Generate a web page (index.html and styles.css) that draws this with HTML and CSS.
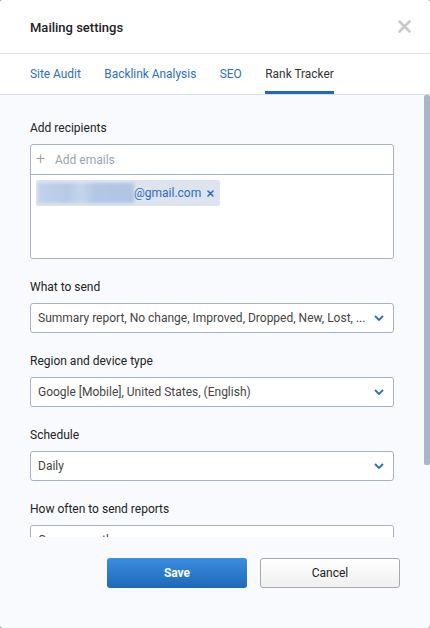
FILE: index.html
```html
<!DOCTYPE html>
<html lang="en">
<head>
    <meta charset="UTF-8">
    <meta name="viewport" content="width=device-width, initial-scale=1.0">
    <title>Mailing settings</title>
    <link rel="stylesheet" href="styles.css">
</head>
<body>
    <div class="modal">
        <div class="modal-header">
            <h2 class="modal-title">Mailing settings</h2>
            <button class="close-btn" aria-label="Close">
                <svg width="13" height="13" viewBox="0 0 13 13"><path d="M1.5 1.5l10 10M11.5 1.5l-10 10" stroke="#c9c9c9" stroke-width="2.6" stroke-linecap="round"/></svg>
            </button>
        </div>
        <div class="tabs">
            <a class="tab">Site Audit</a>
            <a class="tab">Backlink Analysis</a>
            <a class="tab">SEO</a>
            <a class="tab active">Rank Tracker</a>
        </div>

        <div class="body-wrap">
            <div class="modal-body">
                <div class="field">
                    <label class="field-label">Add recipients</label>
                    <div class="recipients">
                        <div class="add-row">
                            <span class="plus">+</span>
                            <span class="placeholder">Add emails</span>
                        </div>
                        <div class="tag-area">
                            <span class="tag">
                                <span class="tag-hidden"></span>
                                <span class="tag-text">@gmail.com</span>
                                <svg class="tag-x" width="7" height="7" viewBox="0 0 7 7"><path d="M1 1l5 5M6 1l-5 5" stroke="#2a6ebf" stroke-width="1.6" stroke-linecap="round"/></svg>
                            </span>
                        </div>
                    </div>
                </div>

                <div class="field">
                    <label class="field-label">What to send</label>
                    <div class="select">
                        <span class="select-value">Summary report, No change, Improved, Dropped, New, Lost, ...</span>
                        <svg class="chevron" width="10" height="6" viewBox="0 0 10 6"><path d="M1 1l4 4 4-4" fill="none" stroke="#2a6ebf" stroke-width="1.8"/></svg>
                    </div>
                </div>

                <div class="field">
                    <label class="field-label">Region and device type</label>
                    <div class="select">
                        <span class="select-value">Google [Mobile], United States, (English)</span>
                        <svg class="chevron" width="10" height="6" viewBox="0 0 10 6"><path d="M1 1l4 4 4-4" fill="none" stroke="#2a6ebf" stroke-width="1.8"/></svg>
                    </div>
                </div>

                <div class="field">
                    <label class="field-label">Schedule</label>
                    <div class="select">
                        <span class="select-value">Daily</span>
                        <svg class="chevron" width="10" height="6" viewBox="0 0 10 6"><path d="M1 1l4 4 4-4" fill="none" stroke="#2a6ebf" stroke-width="1.8"/></svg>
                    </div>
                </div>

                <div class="field">
                    <label class="field-label">How often to send reports</label>
                    <div class="select">
                        <span class="select-value">Once a month</span>
                        <svg class="chevron" width="10" height="6" viewBox="0 0 10 6"><path d="M1 1l4 4 4-4" fill="none" stroke="#2a6ebf" stroke-width="1.8"/></svg>
                    </div>
                </div>
            </div>
            <div class="scroll-thumb"></div>
        </div>

        <div class="modal-footer">
            <button class="btn btn-primary">Save</button>
            <button class="btn btn-secondary">Cancel</button>
        </div>
    </div>
</body>
</html>
```

FILE: styles.css
```css
html, body {
    margin: 0;
    height: 100%;
}
body {
    background-color: #a0a0a0;
    font-family: Roboto, "Liberation Sans", Arial, sans-serif;
    color: #222;
}
.modal {
    width: 430px;
    height: 628px;
    background-color: #f8fafd;
    border-radius: 3px;
    overflow: hidden;
    display: flex;
    flex-direction: column;
}
.modal-header {
    height: 54px;
    background-color: #fff;
    border-bottom: 1px solid #dfe5f0;
    display: flex;
    align-items: center;
    justify-content: space-between;
    padding: 0 19px 0 30px;
    box-sizing: border-box;
    flex-shrink: 0;
}
.modal-title {
    margin: 0;
    font-size: 13px;
    font-weight: 500;
    color: #222;
    padding-top: 1px;
}
.close-btn {
    background: none;
    border: none;
    padding: 0;
    cursor: pointer;
    display: flex;
}

.tabs {
    height: 41px;
    background-color: #fff;
    border-bottom: 1px solid #d6deec;
    display: flex;
    gap: 23.5px;
    padding: 0 30px;
    box-sizing: border-box;
    flex-shrink: 0;
}
.tab {
    font-size: 11.9px;
    color: #2b6fc0;
    display: flex;
    align-items: center;
    padding-top: 3px;
    border-bottom: 3px solid transparent;
    cursor: pointer;
}
.tab.active {
    color: #333;
    border-bottom-color: #2567b3;
}

.body-wrap {
    flex: 1;
    position: relative;
    overflow: hidden;
}
.modal-body {
    height: 100%;
    overflow: hidden;
    padding: 25px 36px 0 30px;
}
.scroll-thumb {
    position: absolute;
    top: 0;
    right: 0;
    width: 6px;
    height: 370px;
    background-color: #aab5c9;
    border-radius: 2px;
}

.field {
    margin-bottom: 20px;
}
.field-label {
    display: block;
    font-size: 12px;
    color: #222;
    margin-bottom: 8px;
    line-height: 16px;
}

.recipients {
    background-color: #fff;
    border: 1px solid #a8b2c6;
    border-radius: 3px;
    height: 115px;
    box-sizing: border-box;
}
.add-row {
    height: 29px;
    border-bottom: 1px solid #a8b2c6;
    display: flex;
    align-items: center;
    padding-left: 5px;
}
.plus {
    font-size: 16px;
    color: #999;
    width: 19px;
    font-weight: 300;
    margin-top: -2px;
}
.placeholder {
    font-size: 12px;
    color: #9aa3b8;
}
.tag-area {
    padding: 5px 5px;
}
.tag {
    display: inline-flex;
    align-items: center;
    height: 26px;
    background-color: #dde3ef;
    border-radius: 2px;
    padding: 0 6px 0 2px;
}
.tag-hidden {
    width: 96px;
    height: 20px;
    background: linear-gradient(90deg, #c2d3ea 0%, #b6cae6 30%, #c5d6ec 45%, #b2c7e4 60%, #b0c5e3 100%);
    filter: blur(1.5px);
}
.tag-text {
    font-size: 12px;
    color: #2a6ebf;
}
.tag-x {
    margin-left: 6px;
}

.select {
    height: 30px;
    background-color: #fff;
    border: 1px solid #a8b2c6;
    border-radius: 3px;
    box-sizing: border-box;
    display: flex;
    align-items: center;
    justify-content: space-between;
    padding: 0 9px 0 7px;
}
.select-value {
    font-size: 12px;
    color: #444;
    white-space: nowrap;
}

.modal-footer {
    height: 91px;
    flex-shrink: 0;
    display: flex;
    justify-content: flex-end;
    gap: 13px;
    padding: 21px 30px 0 0;
    box-sizing: border-box;
}
.btn {
    width: 140px;
    height: 30px;
    border-radius: 3px;
    font-family: Roboto, "Liberation Sans", Arial, sans-serif;
    font-size: 12px;
    cursor: pointer;
}
.btn-primary {
    background: linear-gradient(#3b8ee0, #1e68b8);
    border: none;
    color: #fff;
    font-weight: bold;
}
.btn-secondary {
    background: linear-gradient(#fff, #efefef);
    border: 1px solid #a9a9a9;
    color: #222;
}
```
